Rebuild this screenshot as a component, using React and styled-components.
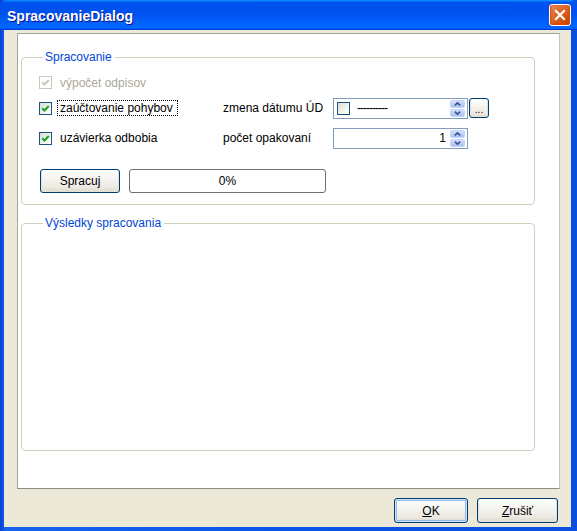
import React from 'react'
import styled, { createGlobalStyle } from 'styled-components'

const GlobalStyle = createGlobalStyle`
  html, body {
    margin: 0;
    padding: 0;
    background: #ffffff;
  }
  body {
    font-family: "Liberation Sans", Arial, sans-serif;
    font-size: 12px;
    color: #000;
  }
  * { box-sizing: border-box; }
`

const Window = styled.div`
  width: 577px;
  height: 531px;
  display: flex;
  flex-direction: column;
  background: linear-gradient(90deg, #0842d4 0%, #1663ee 1%, #0a55e6 50%, #0a4fdd 100%);
`

const TitleBar = styled.div`
  height: 30px;
  flex: none;
  display: flex;
  align-items: center;
  justify-content: space-between;
  padding: 0 6px 0 7px;
  border-radius: 7px 7px 0 0;
  background: linear-gradient(180deg, #0997ff 0%, #0053ee 8%, #0050ee 40%, #0066ff 88%, #0066ff 93%, #005bff 95%, #003dd7 96%, #003dd7 100%);
`

const Title = styled.span`
  color: #fff;
  font-weight: bold;
  font-size: 14px;
  text-shadow: 1px 1px #0f1089;
  padding-top: 2px;
`

const CloseButton = styled.div`
  width: 22px;
  height: 22px;
  border: 1px solid #fff;
  border-radius: 3px;
  display: flex;
  align-items: center;
  justify-content: center;
  background: radial-gradient(circle at 85% 85%, #cc4600 0%, #dc6527 55%, #e7906a 100%);
  box-shadow: inset 0 -1px 2px 1px #da4600;
`

const Client = styled.div`
  flex: 1;
  margin: 0 6px 4px 4px;
  background: #ece9d8;
  display: flex;
  flex-direction: column;
  padding: 3px 11px 4px 13px;
`

const Panel = styled.div`
  height: 456px;
  flex: none;
  background: #fff;
  border: 1px solid #a5a39a;
  border-right-color: #c9c6b8;
  border-bottom-color: #8d8b84;
  padding: 16px 0 0 3px;
  display: flex;
  flex-direction: column;
  gap: 11px;
`

const Group = styled.fieldset`
  width: 514px;
  height: ${p => p.$h}px;
  margin: 0;
  border: 1px solid #d0d0bf;
  border-radius: 4px;
  padding: 8px 0 0 17px;
  min-inline-size: auto;
`

const Legend = styled.legend`
  color: #0046d5;
  font-size: 12px;
  line-height: 14px;
  padding: 0 3px 0 2px;
  margin-left: 4px;
`

const Grid = styled.div`
  display: grid;
  grid-template-columns: 184px 110px auto;
  grid-template-rows: 21px 22px 0px 22px;
  row-gap: 4px;
  align-items: center;
`

const RowSpacer = styled.div`
  grid-column: 1 / -1;
`

const CheckRow = styled.div`
  display: flex;
  align-items: center;
`

const CheckBox = styled.span`
  width: 13px;
  height: 13px;
  flex: none;
  border: 1px solid ${p => (p.$disabled ? '#cac8bb' : '#1c5180')};
  background: ${p => (p.$disabled ? '#fff' : 'linear-gradient(135deg, #dcdcd7 0%, #f4f4f0 60%, #ffffff 100%)')};
  display: flex;
  align-items: center;
  justify-content: center;
`

const CheckLabel = styled.span`
  margin-left: 5px;
  padding: 0 4px 0 2px;
  line-height: 14px;
  border: 1px dotted ${p => (p.$focus ? '#000' : 'transparent')};
  color: ${p => (p.$disabled ? '#aca899' : '#000')};
  white-space: nowrap;
`

const FieldLabel = styled.span`
  white-space: nowrap;
  line-height: 14px;
`

const InputRow = styled.div`
  display: flex;
  align-items: center;
  gap: 1px;
`

const TextBox = styled.div`
  width: ${p => p.$w}px;
  height: ${p => p.$h}px;
  border: 1px solid #7f9db9;
  background: #fff;
  display: flex;
  align-items: center;
  padding: 0 2px 0 3px;
`

const Dashes = styled.span`
  margin-left: 7px;
  letter-spacing: -1px;
  flex: 1;
`

const Value = styled.span`
  flex: 1;
  text-align: right;
  padding-right: 4px;
`

const Spin = styled.div`
  width: 15px;
  height: 17px;
  display: flex;
  flex-direction: column;
  gap: 1px;
`

const SpinPart = styled.div`
  flex: 1;
  border-radius: 2px;
  background: linear-gradient(180deg, #d4e0fd 0%, #bccffa 55%, #a8c0f4 100%);
  border: 1px solid #c3d3fb;
  display: flex;
  align-items: center;
  justify-content: center;
`

const XpButton = styled.div`
  width: ${p => p.$w}px;
  height: ${p => p.$h}px;
  border: 1px solid #003c74;
  border-radius: 3px;
  background: linear-gradient(180deg, #ffffff 0%, #f5f4f0 40%, #ebe9e1 80%, #d8d3c8 100%);
  box-shadow: ${p => (p.$default ? 'inset 0 0 0 1px #cee7ff, inset 0 0 0 2px #98b8ea' : 'inset 0 -1px 0 1px #e3e0d5')};
  display: flex;
  align-items: center;
  justify-content: center;
  font-size: 12px;
  color: #000;
  flex: none;
`

const SmallButton = styled(XpButton)`
  align-items: flex-end;
  padding-bottom: 3px;
  font-size: 10px;
  line-height: 8px;
`

const ActionRow = styled.div`
  margin-top: 20px;
  margin-left: 1px;
  display: flex;
  gap: 9px;
`

const Progress = styled.div`
  width: 197px;
  height: 24px;
  border: 1px solid #6f6f6f;
  border-radius: 3px;
  background: #fff;
  display: flex;
  align-items: center;
  justify-content: center;
`

const Footer = styled.div`
  margin-top: 9px;
  display: flex;
  justify-content: flex-end;
  gap: 9px;
  padding-right: 2px;
`

const Tick = ({ color }) => (
  <svg width="9" height="9" viewBox="0 0 9 9">
    <path d="M1.2 4.2 L3.4 6.4 L7.8 2" fill="none" stroke={color} strokeWidth="2.1" />
  </svg>
)

const Check = ({ checked, disabled }) => (
  <CheckBox $disabled={disabled}>
    {checked && <Tick color={disabled ? '#cac8bb' : '#21a121'} />}
  </CheckBox>
)

const Spinner = () => (
  <Spin>
    <SpinPart>
      <svg width="7" height="4" viewBox="0 0 7 4">
        <path d="M0.8 3.4 L3.5 0.8 L6.2 3.4" fill="none" stroke="#3d5388" strokeWidth="1.6" />
      </svg>
    </SpinPart>
    <SpinPart>
      <svg width="7" height="4" viewBox="0 0 7 4">
        <path d="M0.8 0.6 L3.5 3.2 L6.2 0.6" fill="none" stroke="#3d5388" strokeWidth="1.6" />
      </svg>
    </SpinPart>
  </Spin>
)

export default function App() {
  return (
    <>
      <GlobalStyle />
      <Window>
        <TitleBar>
          <Title>SpracovanieDialog</Title>
          <CloseButton>
            <svg width="12" height="12" viewBox="0 0 12 12">
              <path d="M2 2 L10 10 M10 2 L2 10" stroke="#fff" strokeWidth="2.2" strokeLinecap="square" />
            </svg>
          </CloseButton>
        </TitleBar>
        <Client>
          <Panel>
            <Group $h={155}>
              <Legend>Spracovanie</Legend>
              <Grid>
                <CheckRow>
                  <Check checked disabled />
                  <CheckLabel $disabled>výpočet odpisov</CheckLabel>
                </CheckRow>
                <span />
                <span />

                <CheckRow>
                  <Check checked />
                  <CheckLabel $focus>zaúčtovanie pohybov</CheckLabel>
                </CheckRow>
                <FieldLabel>zmena dátumu ÚD</FieldLabel>
                <InputRow>
                  <TextBox $w={135} $h={21}>
                    <CheckBox />
                    <Dashes>----------</Dashes>
                    <Spinner />
                  </TextBox>
                  <SmallButton $w={20} $h={20}>...</SmallButton>
                </InputRow>

                <RowSpacer />

                <CheckRow>
                  <Check checked />
                  <CheckLabel>uzávierka odbobia</CheckLabel>
                </CheckRow>
                <FieldLabel>počet opakovaní</FieldLabel>
                <InputRow>
                  <TextBox $w={135} $h={21}>
                    <Value>1</Value>
                    <Spinner />
                  </TextBox>
                </InputRow>
              </Grid>
              <ActionRow>
                <XpButton $w={80} $h={24}>Spracuj</XpButton>
                <Progress>0%</Progress>
              </ActionRow>
            </Group>
            <Group $h={235}>
              <Legend>Výsledky spracovania</Legend>
            </Group>
          </Panel>
          <Footer>
            <XpButton $w={74} $h={25} $default><span><u>O</u>K</span></XpButton>
            <XpButton $w={81} $h={25}><span><u>Z</u>rušiť</span></XpButton>
          </Footer>
        </Client>
      </Window>
    </>
  )
}
